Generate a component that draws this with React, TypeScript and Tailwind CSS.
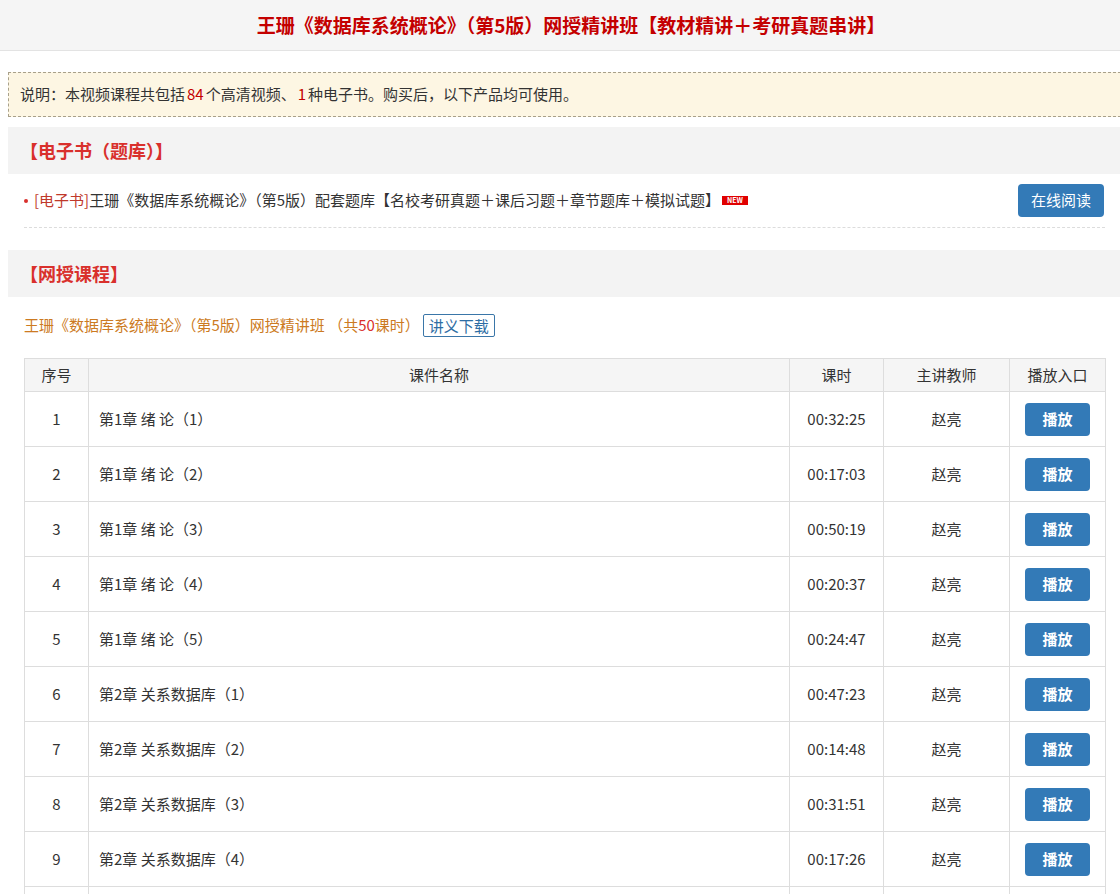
import React from "react";

const font = { fontFamily: '"Noto Sans CJK SC", "Microsoft YaHei", "Noto Sans", sans-serif' };

type Lesson = { no: number; name: string; time: string; teacher: string };

const lessons: Lesson[] = [
    { no: 1, name: "第1章 绪 论（1）", time: "00:32:25", teacher: "赵亮" },
    { no: 2, name: "第1章 绪 论（2）", time: "00:17:03", teacher: "赵亮" },
    { no: 3, name: "第1章 绪 论（3）", time: "00:50:19", teacher: "赵亮" },
    { no: 4, name: "第1章 绪 论（4）", time: "00:20:37", teacher: "赵亮" },
    { no: 5, name: "第1章 绪 论（5）", time: "00:24:47", teacher: "赵亮" },
    { no: 6, name: "第2章 关系数据库（1）", time: "00:47:23", teacher: "赵亮" },
    { no: 7, name: "第2章 关系数据库（2）", time: "00:14:48", teacher: "赵亮" },
    { no: 8, name: "第2章 关系数据库（3）", time: "00:31:51", teacher: "赵亮" },
    { no: 9, name: "第2章 关系数据库（4）", time: "00:17:26", teacher: "赵亮" },
];

function SectionTitle({ children }: { children: React.ReactNode }) {
    return (
        <div className="h-[47px] bg-[#f3f3f3] flex items-center pl-[12px]">
            <span className="text-[18px] font-bold text-[#d9302c]">{children}</span>
        </div>
    );
}

export default function App() {
    return (
        <div className="w-[1120px] h-[894px] overflow-hidden bg-white text-[#333] text-[15px]" style={font}>
            <div className="w-[1142px]">
                {/* top title bar */}
                <div className="h-[51px] bg-[#f5f5f5] border-b border-[#e3e3e3] flex items-center justify-center">
                    <h1 className="text-[19px] font-bold text-[#c40000]">
                        王珊《数据库系统概论》（第5版）网授精讲班【教材精讲＋考研真题串讲】
                    </h1>
                </div>

                <div className="pl-[8px]">
                    <div className="w-[1113px]">
                        {/* notice */}
                        <div className="mt-[21px] h-[45px] border border-dashed border-[#a8a08a] bg-[#fdf6e3] flex items-center pl-[11px]">
                            <span>
                                说明：本视频课程共包括<span className="text-[#c40000] px-[2px]">84</span>个高清视频、
                                <span className="text-[#c40000] px-[2px]">1</span>种电子书。购买后，以下产品均可使用。
                            </span>
                        </div>

                        {/* ebook */}
                        <div className="mt-[10px]">
                            <SectionTitle>【电子书（题库）】</SectionTitle>
                            <div className="mx-[16px] h-[54px] border-b border-dashed border-[#dcdcdc] flex items-center justify-between">
                                <div className="flex items-center">
                                    <span className="w-[4px] h-[4px] rounded-full bg-[#d9302c] mr-[6px]" />
                                    <span className="text-[#c0392b]">[电子书]</span>
                                    <span>王珊《数据库系统概论》（第5版）配套题库【名校考研真题＋课后习题＋章节题库＋模拟试题】</span>
                                    <span className="ml-[2px] w-[26px] h-[9px] bg-[#e00000] text-white text-[7px] font-bold leading-[9px] flex items-center justify-center">
                                        NEW
                                    </span>
                                </div>
                                <button className="w-[86px] h-[33px] rounded-[4px] bg-[#337ab7] text-white text-[15px] mr-[1px]">
                                    在线阅读
                                </button>
                            </div>
                        </div>

                        {/* course */}
                        <div className="mt-[22px]">
                            <SectionTitle>【网授课程】</SectionTitle>
                            <div className="px-[16px]">
                                <div className="mt-[17px] h-[22px] flex items-center text-[#cc7a22]">
                                    <span>
                                        王珊《数据库系统概论》（第5版）网授精讲班 （共<span className="text-[#d9302c]">50</span>课时）
                                    </span>
                                    <button className="ml-[3px] h-[23px] px-[5px] border border-[#3a76a8] rounded-[2px] text-[#2e6da4] text-[15px] leading-none">
                                        讲义下载
                                    </button>
                                </div>

                                <table className="mt-[22px] w-[1081px] border-collapse table-fixed">
                                    <colgroup>
                                        <col className="w-[64px]" />
                                        <col className="w-[701px]" />
                                        <col className="w-[94px]" />
                                        <col className="w-[126px]" />
                                        <col className="w-[96px]" />
                                    </colgroup>
                                    <thead>
                                        <tr className="h-[33px] bg-[#f5f5f5]">
                                            <th className="border border-[#dddddd] font-normal">序号</th>
                                            <th className="border border-[#dddddd] font-normal">课件名称</th>
                                            <th className="border border-[#dddddd] font-normal">课时</th>
                                            <th className="border border-[#dddddd] font-normal">主讲教师</th>
                                            <th className="border border-[#dddddd] font-normal">播放入口</th>
                                        </tr>
                                    </thead>
                                    <tbody>
                                        {lessons.map((l) => (
                                            <tr key={l.no} className="h-[55px]">
                                                <td className="border border-[#dddddd] text-center">{l.no}</td>
                                                <td className="border border-[#dddddd] pl-[10px]">{l.name}</td>
                                                <td className="border border-[#dddddd] text-center">{l.time}</td>
                                                <td className="border border-[#dddddd] text-center">{l.teacher}</td>
                                                <td className="border border-[#dddddd] text-center">
                                                    <button className="w-[65px] h-[33px] rounded-[4px] bg-[#337ab7] text-white font-bold">
                                                        播放
                                                    </button>
                                                </td>
                                            </tr>
                                        ))}
                                        {/* next row, only its top edge is in view */}
                                        <tr className="h-[55px]">
                                            <td className="border border-[#dddddd]" />
                                            <td className="border border-[#dddddd]" />
                                            <td className="border border-[#dddddd]" />
                                            <td className="border border-[#dddddd]" />
                                            <td className="border border-[#dddddd]" />
                                        </tr>
                                    </tbody>
                                </table>
                            </div>
                        </div>
                    </div>
                </div>
            </div>
        </div>
    );
}
